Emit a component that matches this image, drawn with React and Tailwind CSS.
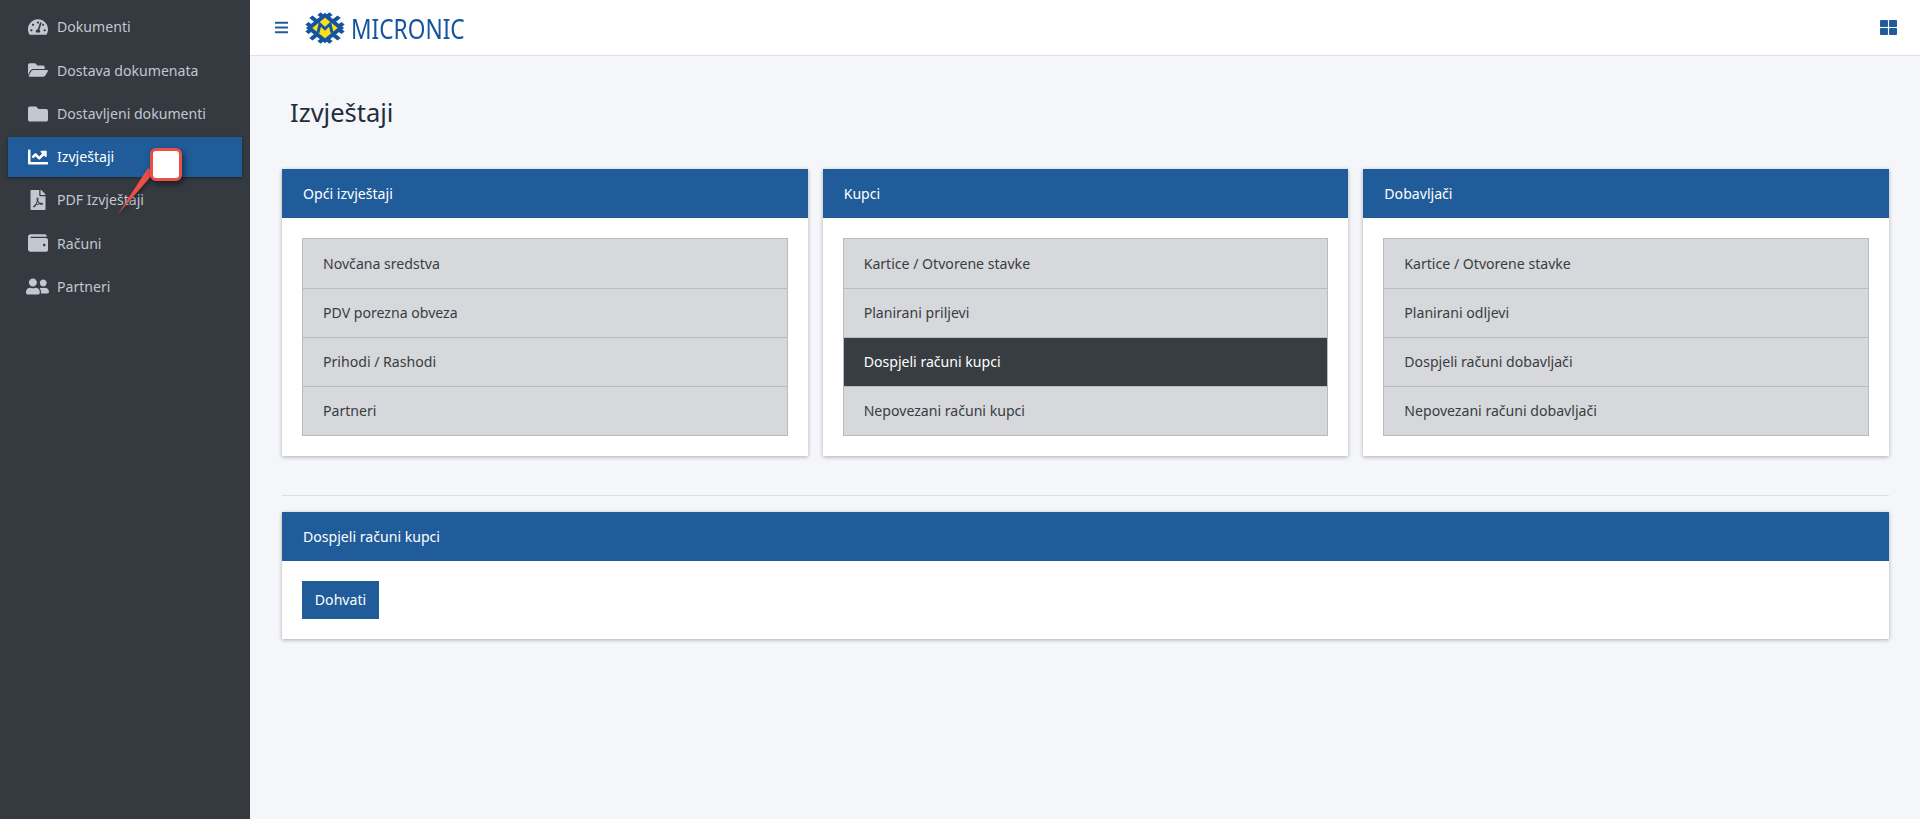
import React from 'react';
import { FaTachometerAlt, FaFolderOpen, FaFolder, FaChartLine, FaFilePdf, FaWallet, FaUserFriends, FaBars, FaThLarge } from 'react-icons/fa';

const navItems = [
  { label: 'Dokumenti', icon: FaTachometerAlt, size: 20 },
  { label: 'Dostava dokumenata', icon: FaFolderOpen, size: 20 },
  { label: 'Dostavljeni dokumenti', icon: FaFolder, size: 20 },
  { label: 'Izvještaji', icon: FaChartLine, size: 20, active: true },
  { label: 'PDF Izvještaji', icon: FaFilePdf, size: 20 },
  { label: 'Računi', icon: FaWallet, size: 20 },
  { label: 'Partneri', icon: FaUserFriends, size: 23 },
];

const cards = [
  { title: 'Opći izvještaji', rows: ['Novčana sredstva', 'PDV porezna obveza', 'Prihodi / Rashodi', 'Partneri'] },
  { title: 'Kupci', rows: ['Kartice / Otvorene stavke', 'Planirani priljevi', 'Dospjeli računi kupci', 'Nepovezani računi kupci'], selected: 2 },
  { title: 'Dobavljači', rows: ['Kartice / Otvorene stavke', 'Planirani odljevi', 'Dospjeli računi dobavljači', 'Nepovezani računi dobavljači'] },
];

// chip drawn square, then turned 45deg and squashed a bit like the logo
const Logo = () => (
  <svg width="40" height="32" viewBox="0 0 40 40" preserveAspectRatio="none" className="shrink-0">
    <g transform="rotate(45 20 20)">
      <g stroke="#1554a0" strokeWidth="4.6" fill="none">
        <path d="M11.5 9 V3 M20 9 V0 M28.5 9 V3" />
        <path d="M11.5 31 V37 M20 31 V40 M28.5 31 V37" />
        <path d="M9 11.5 H3 M9 20 H0 M9 28.5 H3" />
        <path d="M31 11.5 H37 M31 20 H40 M31 28.5 H37" />
      </g>
      <rect x="6.5" y="6.5" width="27" height="27" fill="#1554a0" />
      <rect x="11" y="11" width="18" height="18" fill="#f9e21a" />
    </g>
    <path d="M13 26 L15 15 L20 21 L25 15 L27 26" fill="none" stroke="#1554a0" strokeWidth="3" />
  </svg>
);

const Card = ({ title, children }) => (
  <div className="bg-white shadow-[0_1px_4px_rgba(0,0,0,0.3)]">
    <div className="h-[49px] bg-[#215c9a] px-[21px] flex items-center text-white text-[14.1px]">{title}</div>
    <div className="p-5">{children}</div>
  </div>
);

const App = () => {
  return (
    <div className="flex h-[819px] w-[1920px] overflow-hidden relative bg-[#f4f6f9] font-['Noto_Sans',sans-serif]">
      <aside className="w-[250px] shrink-0 bg-[#343a40] px-2 pt-[7px]">
        {navItems.map((item) => {
          const Icon = item.icon;
          return (
            <div
              key={item.label}
              className={`h-10 mb-[3.25px] flex items-center pl-5 text-[14.1px] ${item.active ? 'bg-[#215c9a] text-white shadow-[0_1px_3px_rgba(0,0,0,0.4)]' : 'text-[#c2c7d0]'}`}
            >
              <span className="w-[29px] flex items-center">
                <Icon size={item.size} className={item.size > 20 ? '-ml-[2px]' : ''} />
              </span>
              {item.label}
            </div>
          );
        })}
      </aside>

      <main className="flex-1 flex flex-col">
        <header className="h-[56px] bg-white border-b border-[#dee2e6] flex items-center pl-[24px] pr-[23px]">
          <FaBars size={15} className="text-[#215c9a]" />
          <div className="ml-[16px] flex items-center gap-[6px]">
            <Logo />
            <span className="w-[114px] text-[28px] leading-none text-[#1554a0] origin-left scale-x-[0.81] whitespace-nowrap">MICRONIC</span>
          </div>
          <FaThLarge size={17} className="ml-auto text-[#215c9a]" />
        </header>

        <div className="pl-[32px] pr-[31px] pt-[38px]">
          <h1 className="text-[25.5px] leading-9 pl-[8px] text-[#1f2d3d]">Izvještaji</h1>

          <div className="grid grid-cols-3 gap-[15px] mt-[39px]">
            {cards.map((card) => (
              <Card key={card.title} title={card.title}>
                <div className="border border-[#b9bbbe] bg-[#d6d8db]">
                  {card.rows.map((row, i) => (
                    <div
                      key={row}
                      className={`h-[49px] flex items-center px-5 text-[14.1px] ${i > 0 ? 'border-t border-[#b9bbbe]' : ''} ${card.selected === i ? 'bg-[#383d41] text-white' : 'text-[#383d41]'}`}
                    >
                      {row}
                    </div>
                  ))}
                </div>
              </Card>
            ))}
          </div>

          <hr className="mt-[39px] mb-4 border-t border-[#dcdfe3]" />

          <Card title="Dospjeli računi kupci">
            <button className="h-[38px] w-[77px] bg-[#215c9a] text-white text-[14.1px]">Dohvati</button>
          </Card>
        </div>
      </main>

      {/* annotation over the menu */}
      <svg className="absolute left-[110px] top-[160px] drop-shadow-[1px_2px_2px_rgba(0,0,0,0.4)]" width="50" height="60" viewBox="0 0 50 60">
        <polygon points="38,8 44,13 8,54" fill="#e8504a" />
      </svg>
      <div className="absolute left-[150px] top-[148px] w-8 h-[33px] bg-white border-[3px] border-[#e8504a] rounded-[6px] shadow-[2px_3px_6px_rgba(0,0,0,0.5)]" />
    </div>
  );
};

export default App;
